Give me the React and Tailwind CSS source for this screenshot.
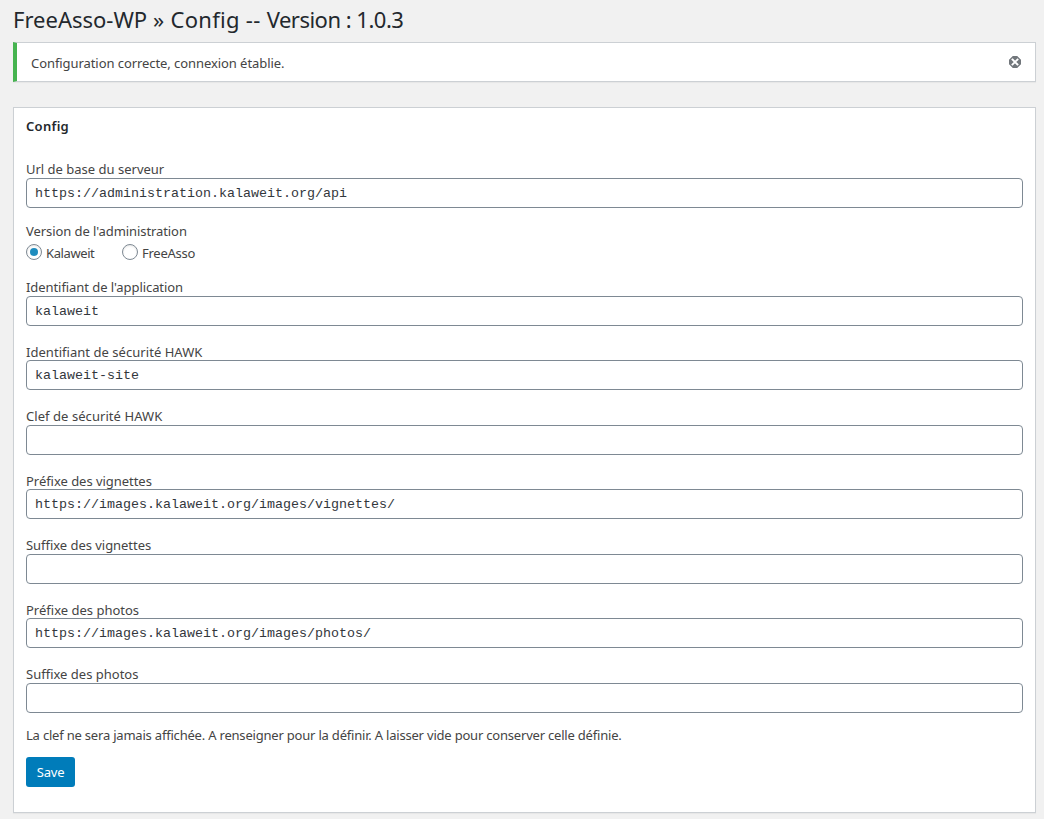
const inputClass =
  "block h-[30px] w-full rounded-[4px] border border-[#7e8993] bg-white px-2 pt-[0.8px] font-['Liberation_Mono',monospace] text-[13.333px] text-[#32373c] outline-none";

function Field({ label, value, tracking }) {
  return (
    <label className="mb-[15px] block">
      <span className={`block h-[19.5px] leading-[23px] whitespace-nowrap ${tracking}`}>{label}</span>
      <input type="text" defaultValue={value} className={inputClass} />
    </label>
  );
}

function Radio({ label, checked, tracking }) {
  return (
    <span className="flex items-center">
      <span className="flex size-4 items-center justify-center rounded-full border border-[#7e8993] bg-white shadow-[inset_0_1px_2px_rgba(0,0,0,0.1)]">
        {checked && <span className="size-2 rounded-full bg-[#1e8cbe]" />}
      </span>
      <span className={`ml-1 h-[18px] leading-[20px] whitespace-nowrap ${tracking}`}>{label}</span>
    </span>
  );
}

export default function App() {
  return (
    <div className="h-[819px] overflow-hidden bg-[#f1f1f1] pr-2 pl-[13px] font-['Noto_Sans',sans-serif] text-[13px] text-[#444]">
      <h1 className="h-[42px] text-[22px] leading-[38px] whitespace-nowrap text-[#23282d]">
        FreeAsso-WP <span className="tracking-[0.3px]">» Config -- </span>
        <span className="tracking-[-0.5px]">Version : 1.0.3</span>
      </h1>
      <div className="flex h-10 items-center justify-between border border-l-4 border-[#ccd0d4] border-l-[#46b450] bg-white pr-[14px] pl-[14px] shadow-[0_1px_1px_rgba(0,0,0,0.04)]">
        <p className="pt-[3px] tracking-[-0.07px] whitespace-nowrap">Configuration correcte, connexion établie.</p>
        <svg width="12" height="12" viewBox="0 0 12 12" aria-hidden="true">
          <path d="M4 0H8L12 4V8L8 12H4L0 8V4Z" fill="#72777c" stroke="#72777c" strokeWidth=".4" />
          <path d="M3.5 3.5L8.5 8.5M8.5 3.5L3.5 8.5" stroke="#fff" strokeWidth="1.9" strokeLinecap="square" />
        </svg>
      </div>
      <section className="mt-[25px] h-[706px] border border-[#ccd0d4] bg-white px-3 shadow-[0_1px_1px_rgba(0,0,0,0.04)]">
        <h2 className="h-[50.3px] leading-[36px] font-semibold tracking-[0.3px] text-[#23282d]">Config</h2>
        <Field label="Url de base du serveur" value="https://administration.kalaweit.org/api" tracking="" />
        <div className="mb-[15px] h-[38.5px]">
          <span className="block h-[19.5px] leading-[17px] tracking-[-0.08px]">Version de l'administration</span>
          <div className="flex h-[19px] items-center gap-7">
            <Radio label="Kalaweit" checked tracking="w-12 tracking-[-0.4px]" />
            <Radio label="FreeAsso" tracking="tracking-[-0.25px]" />
          </div>
        </div>
        <Field label="Identifiant de l'application" value="kalaweit" tracking="tracking-[-0.07px]" />
        <Field label="Identifiant de sécurité HAWK" value="kalaweit-site" tracking="tracking-[0.04px]" />
        <Field label="Clef de sécurité HAWK" value="" tracking="tracking-[0.06px]" />
        <Field label="Préfixe des vignettes" value="https://images.kalaweit.org/images/vignettes/" tracking="tracking-[-0.04px]" />
        <Field label="Suffixe des vignettes" value="" tracking="tracking-[-0.04px]" />
        <Field label="Préfixe des photos" value="https://images.kalaweit.org/images/photos/" tracking="" />
        <Field label="Suffixe des photos" value="" tracking="" />
        <p className="mb-[10.2px] h-[19px] leading-[15px] tracking-[-0.2px] whitespace-nowrap">
          La clef ne sera jamais affichée. A renseigner pour la définir. A laisser vide pour conserver celle définie.
        </p>
        <button type="button" className="block h-[30px] w-[49px] rounded-[3px] bg-[#007cba] pt-[2px] tracking-[-0.2px] text-white">
          Save
        </button>
      </section>
    </div>
  );
}
